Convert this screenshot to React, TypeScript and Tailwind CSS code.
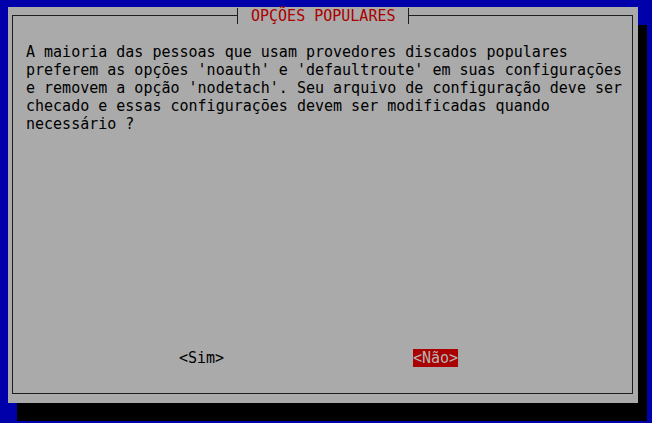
import React from "react";

const lines = [
  "A maioria das pessoas que usam provedores discados populares",
  "preferem as opções 'noauth' e 'defaultroute' em suas configurações",
  "e removem a opção 'nodetach'. Seu arquivo de configuração deve ser",
  "checado e essas configurações devem ser modificadas quando",
  "necessário ?",
];

export default function App() {
  return (
    <div className="w-[652px] h-[423px] bg-[#0000aa] pl-[8px] pt-[7px] overflow-hidden font-['DejaVu_Sans_Mono',monospace] text-[15px] leading-[18px] text-black">
      <div className="relative w-[630px] h-[396px] bg-[#aaaaaa] shadow-[9px_18px_0_0_#000] pt-[8px] pl-[4px] pr-[5px] pb-[9px] flex">
        <div className="flex-1 border border-[#1e1e1e] flex flex-col">
          <div className="pt-[27px] pl-[13px] whitespace-pre">
            {lines.map((l, i) => (
              <div key={i} className="h-[18px]">
                {l}
              </div>
            ))}
          </div>
          <div className="mt-auto mb-[26px] ml-[166px] flex gap-[189px] whitespace-pre">
            <div className="h-[18px] w-[45px]">{"<Sim>"}</div>
            <div className="h-[18px] w-[45px] bg-[#aa0000] text-[#b4b4b4]">{"<Não>"}</div>
          </div>
        </div>
        <div className="absolute left-[229px] top-[1px] w-[172px] h-[16px] bg-[#aaaaaa] border-l border-r border-[#1e1e1e] pl-[13px] leading-[16px] text-[#aa0000] whitespace-pre">
          OPÇÕES POPULARES
        </div>
      </div>
    </div>
  );
}
